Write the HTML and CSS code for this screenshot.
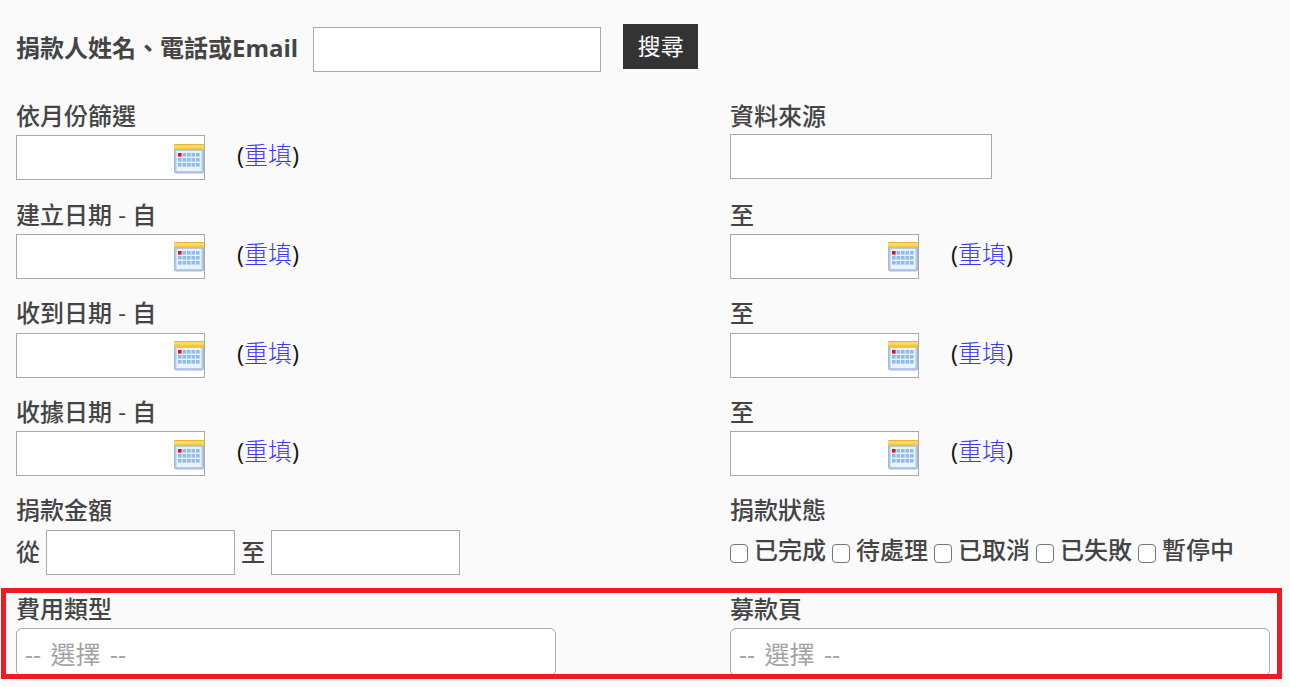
FILE: index.html
```html
<!DOCTYPE html>
<html lang="zh-Hant">
<head>
<meta charset="utf-8">
<title>捐款搜尋</title>
<link rel="stylesheet" href="styles.css">
</head>
<body>
<form class="filters">
  <div class="search-row">
    <label class="search-label">捐款人姓名、電話或Email</label>
    <input class="field search-input" type="text">
    <button class="search-btn" type="button">搜尋</button>
  </div>
  <div class="grid">
    <div class="cell">
      <div class="lbl">依月份篩選</div>
      <div class="line">
        <div class="date"><svg class="cal" viewBox="0 0 30 30"><use href="#cal"/></svg></div>
        <span class="reset">(<a>重填</a>)</span>
      </div>
    </div>
    <div class="cell">
      <div class="lbl">資料來源</div>
      <div class="line"><input class="field source" type="text"></div>
    </div>
    <div class="cell">
      <div class="lbl">建立日期 - 自</div>
      <div class="line">
        <div class="date"><svg class="cal" viewBox="0 0 30 30"><use href="#cal"/></svg></div>
        <span class="reset">(<a>重填</a>)</span>
      </div>
    </div>
    <div class="cell">
      <div class="lbl">至</div>
      <div class="line">
        <div class="date"><svg class="cal" viewBox="0 0 30 30"><use href="#cal"/></svg></div>
        <span class="reset">(<a>重填</a>)</span>
      </div>
    </div>
    <div class="cell">
      <div class="lbl">收到日期 - 自</div>
      <div class="line">
        <div class="date"><svg class="cal" viewBox="0 0 30 30"><use href="#cal"/></svg></div>
        <span class="reset">(<a>重填</a>)</span>
      </div>
    </div>
    <div class="cell">
      <div class="lbl">至</div>
      <div class="line">
        <div class="date"><svg class="cal" viewBox="0 0 30 30"><use href="#cal"/></svg></div>
        <span class="reset">(<a>重填</a>)</span>
      </div>
    </div>
    <div class="cell">
      <div class="lbl">收據日期 - 自</div>
      <div class="line">
        <div class="date"><svg class="cal" viewBox="0 0 30 30"><use href="#cal"/></svg></div>
        <span class="reset">(<a>重填</a>)</span>
      </div>
    </div>
    <div class="cell">
      <div class="lbl">至</div>
      <div class="line">
        <div class="date"><svg class="cal" viewBox="0 0 30 30"><use href="#cal"/></svg></div>
        <span class="reset">(<a>重填</a>)</span>
      </div>
    </div>
    <div class="cell">
      <div class="lbl">捐款金額</div>
      <div class="line amount">
        <span class="unit">從</span><input class="field money" type="text">
        <span class="unit">至</span><input class="field money" type="text">
      </div>
    </div>
    <div class="cell">
      <div class="lbl">捐款狀態</div>
      <div class="line checks">
        <label class="check"><span class="box"></span>已完成</label>
        <label class="check"><span class="box"></span>待處理</label>
        <label class="check"><span class="box"></span>已取消</label>
        <label class="check"><span class="box"></span>已失敗</label>
        <label class="check"><span class="box"></span>暫停中</label>
      </div>
    </div>
    <div class="cell">
      <div class="lbl">費用類型</div>
      <div class="select">-- 選擇 --</div>
    </div>
    <div class="cell">
      <div class="lbl">募款頁</div>
      <div class="select">-- 選擇 --</div>
    </div>
  </div>
</form>
<div class="highlight"></div>
<svg class="defs" width="0" height="0">
  <defs>
    <linearGradient id="cal-top" x1="0" y1="0" x2="0" y2="1">
      <stop offset="0" stop-color="#d9a02e"/>
      <stop offset="0.3" stop-color="#fde46f"/>
      <stop offset="1" stop-color="#f4bc20"/>
    </linearGradient>
    <symbol id="cal" viewBox="0 0 30 30">
      <rect x="0.5" y="1" width="29" height="28" rx="1.5" fill="#b4c9ea" stroke="#a9b6d6"/>
      <rect x="0" y="0" width="30" height="6" rx="1" fill="url(#cal-top)"/>
      <rect x="2.5" y="7" width="25" height="20" fill="#eaf2fb"/>
      <g fill="#8fbdea">
        <rect x="4" y="9" width="3.6" height="3.6" fill="#e3101c"/><rect x="8.5" y="9" width="3.6" height="3.6"/><rect x="13" y="9" width="3.6" height="3.6"/><rect x="17.5" y="9" width="3.6" height="3.6"/><rect x="22" y="9" width="3.6" height="3.6"/>
        <rect x="4" y="14" width="3.6" height="3.6"/><rect x="8.5" y="14" width="3.6" height="3.6"/><rect x="13" y="14" width="3.6" height="3.6"/><rect x="17.5" y="14" width="3.6" height="3.6"/><rect x="22" y="14" width="3.6" height="3.6"/>
        <rect x="4" y="19" width="3.6" height="3.6"/><rect x="8.5" y="19" width="3.6" height="3.6"/><rect x="13" y="19" width="3.6" height="3.6"/><rect x="17.5" y="19" width="3.6" height="3.6"/><rect x="22" y="19" width="3.6" height="3.6"/>
      </g>
    </symbol>
  </defs>
</svg>
</body>
</html>
```
FILE: styles.css
```css
html, body {
  margin: 0;
  height: 687px;
  overflow: hidden;
  background: #fafafa;
}
body {
  position: relative;
  font-family: "Open Sans", "Noto Sans CJK TC", sans-serif;
  font-size: 24px;
  color: #444;
}
.filters {
  padding: 24px 16px 0;
}
.search-row {
  display: flex;
  align-items: flex-start;
  height: 48px;
}
.search-label {
  font-weight: 700;
  line-height: 48px;
  margin-right: 15px;
}
.field {
  box-sizing: border-box;
  border: 1px solid #a9a9a9;
  background: #fff;
  padding: 0;
  margin: 0;
  display: block;
}
.search-input {
  width: 288px;
  height: 45px;
  margin-top: 3px;
}
.search-btn {
  margin-left: 22px;
  width: 75px;
  height: 45px;
  border: 0;
  padding: 0 0 4px;
  background: #333;
  color: #fff;
  font: inherit;
  font-size: 23px;
}
.grid {
  display: grid;
  grid-template-columns: 714px 1fr;
  grid-auto-rows: 98.6px;
  margin-top: 28px;
}
.cell {
  display: flex;
  flex-direction: column;
}
.lbl {
  height: 35.4px;
  line-height: 32px;
  font-weight: 500;
  white-space: nowrap;
}
.line {
  box-sizing: border-box;
  display: flex;
  align-items: center;
  height: 45px;
  flex: none;
}
.date {
  box-sizing: border-box;
  width: 189px;
  height: 45px;
  border: 1px solid #a9a9a9;
  background: #fff;
  display: flex;
  justify-content: flex-end;
  align-items: center;
  padding: 2px 0 0;
}
.cal {
  width: 30px;
  height: 30px;
  display: block;
}
.reset {
  margin: 0 0 8px 32px;
  color: #111;
}
.reset a {
  color: #3a3aff;
  font-weight: 300;
}
.source {
  width: 262px;
  height: 45px;
  margin: -1px 0 1px;
}
.money {
  width: 189px;
  height: 45px;
}
.unit {
  margin: 0 6px 4px 0;
  font-weight: 500;
}
.money + .unit {
  margin-left: 6px;
}
.checks {
  gap: 6px;
  padding-bottom: 8px;
}
.check {
  display: flex;
  align-items: center;
  white-space: nowrap;
  font-weight: 500;
}
.box {
  box-sizing: border-box;
  width: 18px;
  height: 19px;
  border: 1.5px solid #767676;
  border-radius: 4px;
  background: #fff;
  margin: 11px 6px 0 0;
}
.select {
  box-sizing: border-box;
  width: 540px;
  height: 48px;
  border: 1px solid #aaa;
  border-radius: 6px;
  background: #fff;
  color: #a3a3a3;
  padding: 8px 8px 0;
  line-height: 34px;
  font-size: 25px;
  word-spacing: 3px;
}
.highlight {
  position: absolute;
  left: 1px;
  top: 588px;
  width: 1281px;
  height: 91px;
  box-sizing: border-box;
  border: 5px solid #ed1c24;
  pointer-events: none;
}
.defs {
  position: absolute;
}
```
